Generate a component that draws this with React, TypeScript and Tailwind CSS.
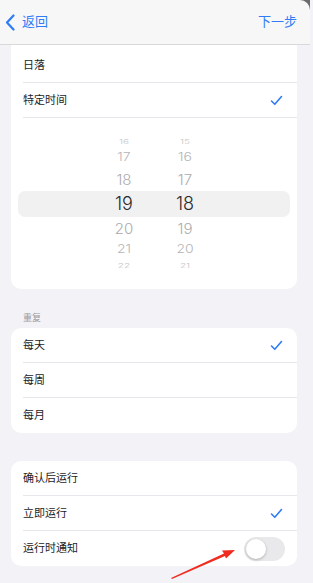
import React from "react";

const font = { fontFamily: "Inter, 'Noto Sans CJK SC', 'Noto Sans', sans-serif" };

function Check() {
  return (
    <svg width="13" height="11" viewBox="0 0 13 11" fill="none">
      <path d="M1.5 6 L4.8 9.3 L11.5 1.5" stroke="#2f7cf6" strokeWidth="1.6" strokeLinecap="round" strokeLinejoin="round" />
    </svg>
  );
}

function Row({ label, checked, last, children }: { label: string; checked?: boolean; last?: boolean; children?: React.ReactNode }) {
  return (
    <div className="relative flex h-[35px] items-center pl-[12px] pr-[14px]">
      <span className="flex-1 text-[11px] text-[#1c1c1e]">{label}</span>
      {checked && <Check />}
      {children}
      {!last && <div className="absolute bottom-0 left-[12px] right-0 h-px bg-[#e8e8ec]" />}
    </div>
  );
}

const hours = [
  { t: "16", size: 10, sy: 0.6, y: 141, c: "#c4c4c6" },
  { t: "17", size: 14, sy: 0.8, y: 156, c: "#b5b5b8" },
  { t: "18", size: 15, sy: 0.92, y: 178, c: "#ababae" },
  { t: "19", size: 18, sy: 1, y: 203, c: "#2a2a2c" },
  { t: "20", size: 15, sy: 0.92, y: 227, c: "#ababae" },
  { t: "21", size: 14, sy: 0.8, y: 248, c: "#b5b5b8" },
  { t: "22", size: 10, sy: 0.6, y: 265, c: "#c4c4c6" },
];
const mins = ["15", "16", "17", "18", "19", "20", "21"];

export default function App() {
  return (
    <div className="relative h-[583px] w-[313px] overflow-hidden bg-[#f2f2f7]" style={font}>
      <div className="relative w-[310px]">
        <div className="absolute right-0 top-0 h-[10px] w-[10px] bg-[#6b6b6e]" />
        {/* header */}
        <div className="relative z-10 flex h-[45px] items-center justify-between rounded-tr-[10px] border-b border-[#d9d9dc] bg-[#f7f7f8] pl-[5px] pr-[13px]">
          <div className="flex items-center gap-[7px] text-[#2f7cf6]">
            <svg width="10" height="17" viewBox="0 0 10 17" fill="none">
              <path d="M8.5 1.5 L2 8.5 L8.5 15.5" stroke="#2f7cf6" strokeWidth="2.2" strokeLinecap="round" strokeLinejoin="round" />
            </svg>
            <span className="text-[13px]">返回</span>
          </div>
          <span className="text-[13px] text-[#2f7cf6]">下一步</span>
        </div>

        <div className="flex flex-col pl-[11px] pr-[13px]">
          {/* card 1 */}
          <div className="rounded-b-[10px] bg-white pt-[3px]">
            <Row label="日落" />
            <Row label="特定时间" checked />
            <div className="relative h-[171px]">
              <div className="absolute left-[7px] right-[7px] top-[73px] h-[26px] rounded-[7px] bg-[#f1f1f2]" />
              {hours.map((h, i) => (
                <React.Fragment key={h.t}>
                  <div
                    className="absolute flex w-[30px] justify-center leading-none"
                    style={{ left: 98, top: h.y - 117 - h.size / 2, fontSize: h.size, color: h.c, fontWeight: 300, transform: `scaleY(${h.sy})` }}
                  >
                    {h.t}
                  </div>
                  <div
                    className="absolute flex w-[30px] justify-center leading-none"
                    style={{ left: 159, top: h.y - 117 - h.size / 2, fontSize: h.size, color: h.c, fontWeight: 300, transform: `scaleY(${h.sy})` }}
                  >
                    {mins[i]}
                  </div>
                </React.Fragment>
              ))}
            </div>
          </div>

          <div className="pl-[12px] pt-[23px] pb-[5px] text-[9px] leading-[11px] text-[#9a9a9e]">重复</div>
          <div className="rounded-[10px] bg-white">
            <Row label="每天" checked />
            <Row label="每周" />
            <Row label="每月" last />
          </div>

          <div className="mt-[28px] rounded-[10px] bg-white">
            <Row label="确认后运行" />
            <Row label="立即运行" checked />
            <Row label="运行时通知" last>
              <div className="relative -mr-[2px] h-[24px] w-[41px] rounded-full bg-[#e9e9eb]">
                <div className="absolute left-[2px] top-[2px] h-[20px] w-[20px] rounded-full bg-white shadow-[0_1px_3px_rgba(0,0,0,0.25)]" />
              </div>
            </Row>
          </div>
        </div>
      </div>

      {/* red arrow */}
      <svg className="absolute left-0 top-0" width="313" height="583" viewBox="0 0 313 583">
        <polygon points="171,578 224,553.5 222,550.5 235,550 226,558.5 225,556 172,579" fill="#f02c1e" />
      </svg>
    </div>
  );
}
